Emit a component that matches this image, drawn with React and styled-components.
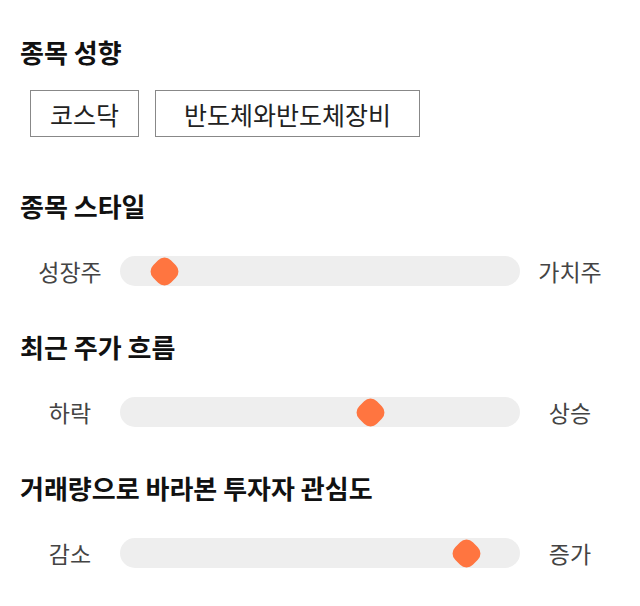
import React from 'react';
import styled, { createGlobalStyle } from 'styled-components';

const GlobalStyle = createGlobalStyle`
  body {
    margin: 0;
    background: #fff;
    font-family: "Noto Sans CJK KR", "Noto Sans", sans-serif;
  }
`;

const Page = styled.div`
  width: 640px;
  padding: 34px 20px 0;
  box-sizing: border-box;
`;

const Section = styled.section`
  margin-bottom: ${props => props.$gap || 0}px;
`;

const Heading = styled.h2`
  margin: 0;
  font-size: 26px;
  font-weight: 700;
  line-height: 36px;
  color: #111;
`;

const ChipRow = styled.div`
  display: flex;
  gap: 16px;
  margin: 20px 0 0 10px;
`;

const Chip = styled.div`
  height: 47px;
  box-sizing: border-box;
  border: 1px solid #888;
  padding: 0 ${props => props.$pad || 20}px;
  display: flex;
  align-items: center;
  font-size: 25px;
  color: #222;
`;

const SliderRow = styled.div`
  display: grid;
  grid-template-columns: 100px 1fr 100px;
  align-items: center;
  margin-top: 32px;
`;

const SideLabel = styled.span`
  text-align: center;
  font-size: 23px;
  line-height: 30px;
  color: #444;
`;

const Track = styled.div`
  position: relative;
  height: 30px;
  border-radius: 15px;
  background: #eeeeee;
`;

const Thumb = styled.div`
  position: absolute;
  top: 50%;
  width: 25px;
  height: 25px;
  margin: -12.5px 0 0 -12.5px;
  border-radius: 9px;
  background: #ff7540;
  transform: rotate(45deg);
`;

const sliders = [
  { title: '종목 스타일', left: '성장주', right: '가치주', value: 11 },
  { title: '최근 주가 흐름', left: '하락', right: '상승', value: 62.5 },
  { title: '거래량으로 바라본 투자자 관심도', left: '감소', right: '증가', value: 86.5 },
];

const App = () => {
  return (
    <Page>
      <GlobalStyle />
      <Section $gap={51}>
        <Heading>종목 성향</Heading>
        <ChipRow>
          <Chip $pad={19}>코스닥</Chip>
          <Chip $pad={28}>반도체와반도체장비</Chip>
        </ChipRow>
      </Section>
      {sliders.map((s, i) => (
        <Section key={i} $gap={43}>
          <Heading>{s.title}</Heading>
          <SliderRow>
            <SideLabel>{s.left}</SideLabel>
            <Track>
              <Thumb style={{ left: `${s.value}%` }} />
            </Track>
            <SideLabel>{s.right}</SideLabel>
          </SliderRow>
        </Section>
      ))}
    </Page>
  );
};

export default App;
